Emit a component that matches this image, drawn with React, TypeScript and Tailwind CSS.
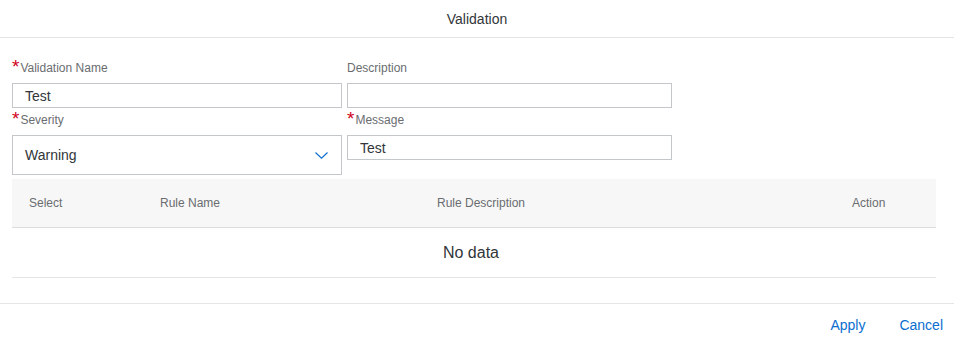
import React from "react";

const font = { fontFamily: '"Liberation Sans", Arial, sans-serif' };

function Label({ text, required }: { text: string; required?: boolean }) {
  return (
    <div className="h-4 flex items-start text-xs leading-4 text-[#6a6d70]">
      {required && <span className="text-[19px] leading-[19px] h-4 text-[#d0021b] -mt-[3px] mr-[1px]">*</span>}
      <span>{text}</span>
    </div>
  );
}

export default function App() {
  return (
    <div className="w-[954px] h-[341px] bg-white flex flex-col overflow-hidden" style={font}>
      <div className="h-[38px] border-b border-[#e5e5e5] flex items-center justify-center text-sm text-[#32363a]">
        Validation
      </div>

      <div className="px-3 pt-[22px]">
        <div className="grid grid-cols-[330px_325px] gap-x-[5px]">
          <div>
            <Label text="Validation Name" required />
            <div className="mt-[7px] h-[25px] border border-[#c4c7ca] flex items-center pl-3 text-sm text-[#32363a]">
              Test
            </div>
          </div>
          <div>
            <Label text="Description" />
            <div className="mt-[7px] h-[25px] border border-[#c4c7ca]" />
          </div>
          <div className="mt-1">
            <Label text="Severity" required />
            <div className="mt-[7px] h-10 border border-[#c4c7ca] flex items-center justify-between pl-3 pr-[13px] text-sm text-[#32363a]">
              <span>Warning</span>
              <svg width="13" height="7" viewBox="0 0 13 7" fill="none">
                <path d="M0.5 0.5L6.5 6.2L12.5 0.5" stroke="#0a6ed1" strokeWidth="1.1" />
              </svg>
            </div>
          </div>
          <div className="mt-1">
            <Label text="Message" required />
            <div className="mt-[7px] h-[25px] border border-[#c4c7ca] flex items-center pl-3 text-sm text-[#32363a]">
              Test
            </div>
          </div>
        </div>

        <div className="mt-1 w-[924px]">
          <div className="h-[49px] bg-[#f7f7f7] border-b border-[#dcdcdc] grid grid-cols-[131px_277px_415px_101px] items-center text-xs text-[#6a6d70]">
            <div className="pl-[17px]">Select</div>
            <div className="pl-[17px]">Rule Name</div>
            <div className="pl-[17px]">Rule Description</div>
            <div className="pl-[17px]">Action</div>
          </div>
          <div className="h-[50px] border-b border-[#e5e5e5] flex items-center justify-center pr-[6px] text-base text-[#32363a]">
            No data
          </div>
        </div>
      </div>

      <div className="mt-[25px] flex-1 border-t border-[#e5e5e5] flex items-center justify-end gap-[34px] pr-[11px] pt-1 text-sm text-[#0a6ed1]">
        <button>Apply</button>
        <button>Cancel</button>
      </div>
    </div>
  );
}
